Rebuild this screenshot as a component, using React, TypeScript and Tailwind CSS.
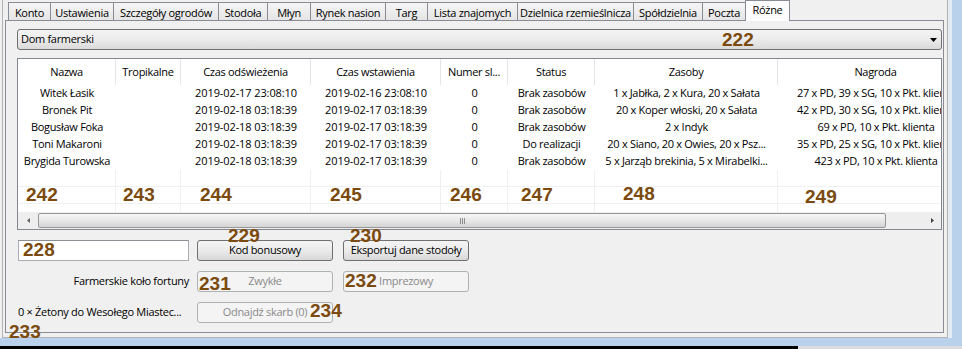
import React from "react";

const tabs: { label: string; w: string }[] = [
  { label: "Konto", w: "w-[42px]" },
  { label: "Ustawienia", w: "w-[63px]" },
  { label: "Szczegóły ogrodów", w: "w-[105px]" },
  { label: "Stodoła", w: "w-[49px]" },
  { label: "Młyn", w: "w-[43px]" },
  { label: "Rynek nasion", w: "w-[75px]" },
  { label: "Targ", w: "w-[42px]" },
  { label: "Lista znajomych", w: "w-[90px]" },
  { label: "Dzielnica rzemieślnicza", w: "w-[116px]" },
  { label: "Spółdzielnia", w: "w-[69px]" },
  { label: "Poczta", w: "w-[43px]" },
];

const cols: { label: string; w: string }[] = [
  { label: "Nazwa", w: "w-[98px]" },
  { label: "Tropikalne", w: "w-[65px]" },
  { label: "Czas odświeżenia", w: "w-[130px]" },
  { label: "Czas wstawienia", w: "w-[130px]" },
  { label: "Numer sl...", w: "w-[67px]" },
  { label: "Status", w: "w-[87px]" },
  { label: "Zasoby", w: "w-[183px]" },
  { label: "Nagroda", w: "w-[196px]" },
];

const rows: string[][] = [
  ["Witek Łasik", "", "2019-02-17 23:08:10", "2019-02-16 23:08:10", "0", "Brak zasobów", "1 x Jabłka, 2 x Kura, 20 x Sałata", "27 x PD, 39 x SG, 10 x Pkt. klienta"],
  ["Bronek Pit", "", "2019-02-18 03:18:39", "2019-02-17 03:18:39", "0", "Brak zasobów", "20 x Koper włoski, 20 x Sałata", "42 x PD, 30 x SG, 10 x Pkt. klienta"],
  ["Bogusław Foka", "", "2019-02-18 03:18:39", "2019-02-17 03:18:39", "0", "Brak zasobów", "2 x Indyk", "69 x PD, 10 x Pkt. klienta"],
  ["Toni Makaroni", "", "2019-02-18 03:18:39", "2019-02-17 03:18:39", "0", "Do realizacji", "20 x Siano, 20 x Owies, 20 x Psz...", "35 x PD, 25 x SG, 10 x Pkt. klienta"],
  ["Brygida Turowska", "", "2019-02-18 03:18:39", "2019-02-17 03:18:39", "0", "Brak zasobów", "5 x Jarząb brekinia, 5 x Mirabelki...", "423 x PD, 10 x Pkt. klienta"],
];

const marks: { t: string; pos: string }[] = [
  { t: "222", pos: "left-[722px] top-[30px]" },
  { t: "242", pos: "left-[26px] top-[185px]" },
  { t: "243", pos: "left-[123px] top-[185px]" },
  { t: "244", pos: "left-[200px] top-[185px]" },
  { t: "245", pos: "left-[330px] top-[185px]" },
  { t: "246", pos: "left-[450px] top-[185px]" },
  { t: "247", pos: "left-[521px] top-[185px]" },
  { t: "248", pos: "left-[623px] top-[184px]" },
  { t: "249", pos: "left-[805px] top-[187px]" },
  { t: "228", pos: "left-[23px] top-[240px]" },
  { t: "229", pos: "left-[228px] top-[226px]" },
  { t: "230", pos: "left-[350px] top-[226px]" },
  { t: "231", pos: "left-[199px] top-[274px]" },
  { t: "232", pos: "left-[345px] top-[271px]" },
  { t: "234", pos: "left-[310px] top-[301px]" },
  { t: "233", pos: "left-[9px] top-[322px]" },
];

const btn =
  "h-[21px] rounded-[3px] border border-[#707070] bg-linear-to-b from-[#f4f4f4] via-[#ebebeb] to-[#d8d8d8] flex items-center justify-center text-black";
const btnDis =
  "h-[21px] rounded-[3px] border border-[#adb2b5] bg-[#f4f4f4] flex items-center justify-center text-[#8a8a8a]";

export default function App() {
  return (
    <div className="w-[962px] h-[349px] bg-[#f0f0f0] relative overflow-hidden font-['Open_Sans',sans-serif] text-[11px] tracking-[-0.3px] text-black flex flex-col">
      <div className="flex h-[338px]">
        <div className="w-[2px]" />
        <div className="w-[946px] h-[338px] border-l border-r border-b border-[#b4b4b4] pl-[2px] pr-[3px] flex flex-col">
          {/* tabs */}
          <div className="h-[20px] flex items-start pl-[3px] relative z-10">
            {tabs.map((t) => (
              <div
                key={t.label}
                className={`${t.w} mt-[2px] h-[18px] border-t border-l border-[#898c95] bg-linear-to-b from-[#f5f5f5] to-[#e5e5e5] flex items-center justify-center whitespace-nowrap leading-none pt-[1px]`}
              >
                {t.label}
              </div>
            ))}
            <div className="w-[45px] h-[21px] border-t border-l border-r border-[#898c95] bg-[#fcfcfc] flex items-start justify-center pt-[3px] leading-none whitespace-nowrap">
              Różne
            </div>
          </div>
          {/* panel */}
          <div className="h-[313px] border border-[#898c95] bg-[#f0f0f0] pl-[11px] pr-[1px] pt-[8px] flex flex-col">
            {/* combo */}
            <div className="h-[21px] w-[925px] rounded-[3px] border border-[#707070] bg-linear-to-b from-[#f4f4f4] via-[#ebebeb] to-[#dadada] flex items-center justify-between pl-[3px] pr-[4px]">
              <span>Dom farmerski</span>
              <svg width="7" height="4" viewBox="0 0 7 4">
                <polygon points="0,0 7,0 3.5,4" fill="#000" />
              </svg>
            </div>
            {/* list view */}
            <div className="mt-[8px] w-[925px] h-[172px] border border-[#828790] bg-white flex flex-col">
              <div className="w-[923px] h-[153px] overflow-hidden">
                <div className="w-[956px] flex flex-col">
                  <div className="h-[26px] flex">
                    {cols.map((c) => (
                      <div
                        key={c.label}
                        className={`${c.w} shrink-0 h-[26px] border-r border-[#e5e5e5] flex items-center justify-center whitespace-nowrap`}
                      >
                        {c.label}
                      </div>
                    ))}
                  </div>
                  {rows.map((r, i) => (
                    <div key={i} className="h-[17px] flex">
                      {r.map((v, j) => (
                        <div
                          key={j}
                          className={`${cols[j].w} shrink-0 h-[17px] flex items-center justify-center whitespace-nowrap overflow-visible ${j === 2 || j === 3 ? "tracking-[-0.1px]" : ""}`}
                        >
                          {v}
                        </div>
                      ))}
                    </div>
                  ))}
                  {[0, 1, 2].map((k) => (
                    <div
                      key={k}
                      className={`${k < 2 ? "h-[17px] border-b border-[#f0f0f0]" : "h-[8px]"} flex`}
                    >
                      {cols.map((c) => (
                        <div key={c.label} className={`${c.w} shrink-0 border-r border-[#f0f0f0]`} />
                      ))}
                    </div>
                  ))}
                </div>
              </div>
              {/* scrollbar */}
              <div className="h-[17px] flex items-stretch bg-[#eeeeee]">
                <div className="w-[20px] flex items-center justify-center">
                  <svg width="3" height="5" viewBox="0 0 3 5">
                    <polygon points="3,0 3,5 0,2.5" fill="#606060" />
                  </svg>
                </div>
                <div className="w-[848px] my-[1px] rounded-[2px] border border-[#979797] bg-linear-to-b from-[#f6f6f6] via-[#e8e8e8] to-[#d4d4d4] flex items-center justify-center gap-[1px]">
                  <div className="w-[1px] h-[6px] bg-[#8c8c8c]" />
                  <div className="w-[1px] h-[6px] bg-[#8c8c8c]" />
                  <div className="w-[1px] h-[6px] bg-[#8c8c8c]" />
                </div>
                <div className="flex-1" />
                <div className="w-[17px] flex items-center justify-center">
                  <svg width="3" height="5" viewBox="0 0 3 5">
                    <polygon points="0,0 0,5 3,2.5" fill="#404040" />
                  </svg>
                </div>
              </div>
            </div>
            {/* controls */}
            <div className="mt-[10px] flex flex-col gap-[10px] pl-[1px]">
              <div className="flex items-center">
                <div className="w-[171px] h-[21px] bg-white border border-[#abadb3] border-t-[#8c8f94]" />
                <div className={`ml-[8px] w-[136px] ${btn}`}>Kod bonusowy</div>
                <div className={`ml-[10px] w-[126px] ${btn}`}>Eksportuj dane stodoły</div>
              </div>
              <div className="flex items-center">
                <div className="w-[171px] text-right whitespace-nowrap">Farmerskie koło fortuny</div>
                <div className={`ml-[8px] w-[136px] ${btnDis}`}>Zwykłe</div>
                <div className={`ml-[10px] w-[126px] ${btnDis}`}>Imprezowy</div>
              </div>
              <div className="flex items-center">
                <div className="w-[171px] whitespace-nowrap">0 × Żetony do Wesołego Miastec...</div>
                <div className={`ml-[8px] w-[136px] ${btnDis}`}>Odnajdź skarb (0)</div>
              </div>
            </div>
          </div>
        </div>
        <div className="w-[4px] bg-[#e3ebf4]" />
        <div className="flex-1 bg-[#b9d1ea]" />
      </div>
      <div className="h-[8px] bg-[#b9d1ea]" />
      <div className="h-[3px] flex">
        <div className="w-[798px] bg-black" />
        <div className="flex-1 bg-[#dadbe3]" />
      </div>
      {/* annotation numbers */}
      {marks.map((m) => (
        <div
          key={m.t}
          className={`absolute ${m.pos} font-['Liberation_Sans',Arial,sans-serif] font-bold text-[19px] tracking-normal leading-none text-[#7b4a0e]`}
        >
          {m.t}
        </div>
      ))}
    </div>
  );
}
